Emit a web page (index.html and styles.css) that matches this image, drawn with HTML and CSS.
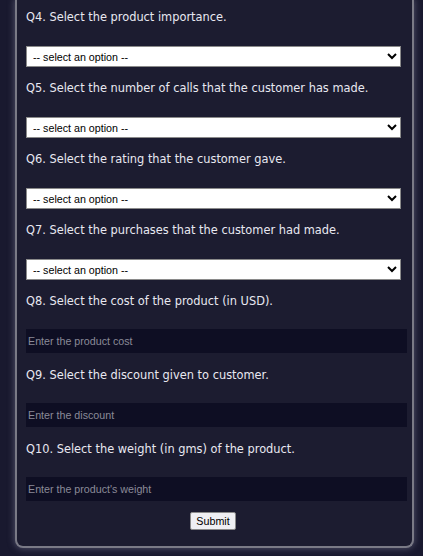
FILE: index.html
```html
<!DOCTYPE html>
<html>
<head>
<meta charset="utf-8">
<link rel="stylesheet" href="styles.css">
</head>
<body>
<div class="panel">
  <form class="form">
    <label class="q">Q4. Select the product importance.</label>
    <select class="sel"><option>-- select an option --</option></select>
    <label class="q">Q5. Select the number of calls that the customer has made.</label>
    <select class="sel"><option>-- select an option --</option></select>
    <label class="q">Q6. Select the rating that the customer gave.</label>
    <select class="sel"><option>-- select an option --</option></select>
    <label class="q">Q7. Select the purchases that the customer had made.</label>
    <select class="sel"><option>-- select an option --</option></select>
    <label class="q">Q8. Select the cost of the product (in USD).</label>
    <input class="inp" type="text" placeholder="Enter the product cost">
    <label class="q">Q9. Select the discount given to customer.</label>
    <input class="inp" type="text" placeholder="Enter the discount">
    <label class="q">Q10. Select the weight (in gms) of the product.</label>
    <input class="inp" type="text" placeholder="Enter the product's weight">
    <div class="actions"><button class="btn" type="button">Submit</button></div>
  </form>
</div>
</body>
</html>
```
FILE: styles.css
```css
html, body {
  margin: 0;
  padding: 0;
  background: #19192f;
}
body {
  height: 556px;
  overflow: hidden;
}
.panel {
  box-sizing: border-box;
  margin-left: 15px;
  width: 399px;
  background: #1c1c30;
  border: 2px solid #7a7a86;
  border-top: none;
  border-radius: 0 0 8px 8px;
  box-shadow: 0 0 6px 1px #4a4a62;
  padding: 0 0 16px 9px;
}
.form {
  display: flex;
  flex-direction: column;
  align-items: flex-start;
}
.q {
  display: block;
  font-family: "DejaVu Sans", sans-serif;
  font-size: 11.4px;
  line-height: 20px;
  color: #e8e8f0;
  margin-top: 11px;
  margin-bottom: 19px;
}
.q:first-child {
  margin-top: 7px;
}
.sel {
  width: 375px;
  height: 21px;
  margin: 0;
  font-family: "Liberation Sans", Arial, sans-serif;
  font-size: 10.7px;
  color: #000;
  background: #fff;
  border: 1px solid #8a8a8a;
  padding: 0 0 0 2px;
}
.inp {
  width: 381px;
  height: 24px;
  box-sizing: border-box;
  margin: 0;
  border: none;
  background: #0e0e23;
  color: #ddd;
  padding: 0 2px;
  font-family: "Liberation Sans", Arial, sans-serif;
  font-size: 10.7px;
  outline: none;
}
.inp::placeholder {
  color: #8a8a98;
}
.q + .inp {
  margin-top: -1px;
}
.inp + .q {
  margin-top: 12px;
}
.actions {
  align-self: stretch;
  display: flex;
  justify-content: center;
  margin-top: 11px;
  padding-right: 12px;
}
.btn {
  font-family: "Liberation Sans", Arial, sans-serif;
  font-size: 10.7px;
  height: 18px;
  padding: 0 5px;
  background: #efeff3;
  border: 1px solid #8a8a8a;
  border-radius: 2px;
  color: #000;
}
```
